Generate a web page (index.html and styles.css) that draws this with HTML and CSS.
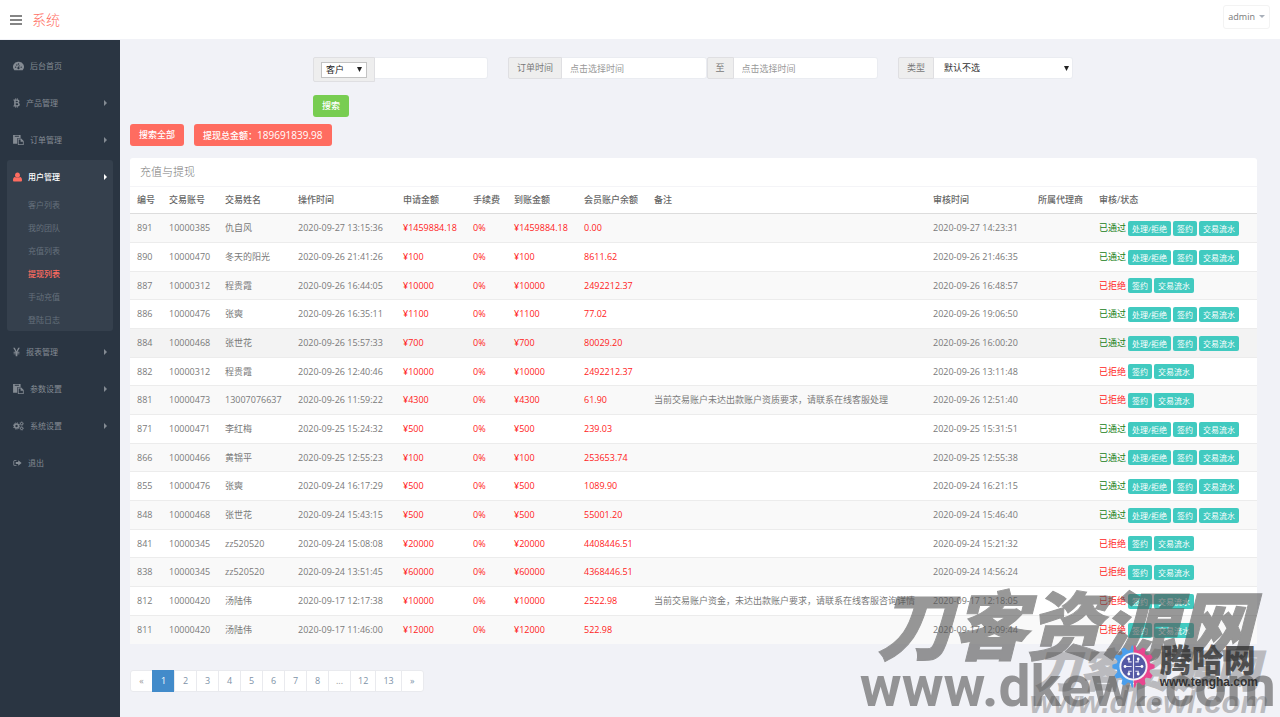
FILE: index.html
```html
<!DOCTYPE html>
<html lang="zh-CN">
<head>
<meta charset="utf-8">
<title>系统</title>
<link rel="stylesheet" href="styles.css">
<script src="app.js" defer></script>
</head>
<body>
<svg class="sprite" aria-hidden="true">
  <symbol id="i-dash" viewBox="0 0 24 24"><path fill-rule="evenodd" d="M12 2A12 12 0 0 0 2 22h20A12 12 0 0 0 12 2ZM5 13a1.7 1.7 0 1 1 .1 3.4A1.7 1.7 0 0 1 5 13Zm3-5.300a1.700 1.700 0 1 1 0 3.400a1.700 1.700 0 0 1 0-3.400Zm4-2.300a1.700 1.700 0 1 1 0 3.400a1.700 1.700 0 0 1 0-3.400Zm2.500 4.600l-1 5a2.600 2.600 0 1 1-2-.5l1.600-5ZM18.500 13a1.700 1.700 0 1 1 0 3.400a1.700 1.700 0 0 1 0-3.400Z"/></symbol>
  <symbol id="i-btc" viewBox="0 0 18 24"><path fill-rule="evenodd" d="M1 3h5V0h2v3h2V0h2v3.300c3 .5 4.500 2 4.500 4.200 0 1.800-1 3-2.500 3.700 2.200.6 3.500 2.200 3.500 4.500 0 3-2 4.900-5.500 5.300v3h-2v-3H8v3H6v-3H1v-2.500h2v-13H1ZM7 6v4h3c3.500 0 3.500-4 0-4Zm0 6.500v5.500h3.500c4 0 4-5.500 0-5.500Z"/></symbol>
  <symbol id="i-paste" viewBox="0 0 26 24"><path fill-rule="evenodd" d="M0 0h18v7h-6c-1.500 0-2 1-2 2v12H0ZM4 2v2h10v-2Z"/><path fill-rule="evenodd" d="M11.500 8.500h8l6 6V24h-14Zm2 2V22h10v-6h-5.500v-5.500Z"/></symbol>
  <symbol id="i-user" viewBox="0 0 22 24"><path d="M11 1c4 0 6 3 6 6.500S14.500 14 11 14 5 11 5 7.500 7 1 11 1Z"/><path d="M5 12c3 3 9 3 12 0 3.500 0 5 4 5 8 0 2-1 3-3 3H3c-2 0-3-1-3-3 0-4 1.500-8 5-8Z"/></symbol>
  <symbol id="i-yen" viewBox="0 0 16 24"><path d="M0 2h4l4 8 4-8h4l-5.500 9.500H15v2h-5v2h5v2h-5V22H6v-4.500H1v-2h5v-2H1v-2h4.500Z"/></symbol>
  <symbol id="i-cogs" viewBox="0 0 28 24"><g fill="none" stroke="currentColor"><circle cx="9" cy="12" r="5" stroke-width="4"/><circle cx="9" cy="12" r="8" stroke-width="2.500" stroke-dasharray="3.140 3.140"/><circle cx="22" cy="6" r="3" stroke-width="2.500"/><circle cx="22" cy="6" r="4.800" stroke-width="1.500" stroke-dasharray="1.900 1.900"/><circle cx="22" cy="18" r="3" stroke-width="2.500"/><circle cx="22" cy="18" r="4.800" stroke-width="1.500" stroke-dasharray="1.900 1.900"/></g></symbol>
  <symbol id="i-out" viewBox="0 0 26 24"><path d="M10 3H6a5 5 0 0 0-5 5v8a5 5 0 0 0 5 5h4v-2.500H6A2.500 2.500 0 0 1 3.500 16V8A2.500 2.500 0 0 1 6 5.500h4Z"/><path d="M8 9h7V4l10 8-10 8v-5H8Z"/></symbol>
</svg>

<header class="topbar">
  <button class="menu-toggle" type="button" aria-label="菜单"><span></span><span></span><span></span></button>
  <a class="brand" href="#">系统</a>
  <button class="account" type="button">admin <i class="caret"></i></button>
</header>

<div class="layout">
  <nav class="sidebar">
    <a class="nav-item" href="#"><svg class="ic wide"><use href="#i-dash"/></svg>后台首页</a>
    <a class="nav-item" href="#"><svg class="ic slim"><use href="#i-btc"/></svg>产品管理<i class="arrow"></i></a>
    <a class="nav-item" href="#"><svg class="ic wide"><use href="#i-paste"/></svg>订单管理<i class="arrow"></i></a>
    <div class="nav-group">
      <a class="nav-item open" href="#"><svg class="ic"><use href="#i-user"/></svg>用户管理<i class="arrow"></i></a>
      <a class="sub-item" href="#">客户列表</a>
      <a class="sub-item" href="#">我的团队</a>
      <a class="sub-item" href="#">充值列表</a>
      <a class="sub-item current" href="#">提现列表</a>
      <a class="sub-item" href="#">手动充值</a>
      <a class="sub-item" href="#">登陆日志</a>
    </div>
    <a class="nav-item" href="#"><svg class="ic slim"><use href="#i-yen"/></svg>报表管理<i class="arrow"></i></a>
    <a class="nav-item" href="#"><svg class="ic wide"><use href="#i-paste"/></svg>参数设置<i class="arrow"></i></a>
    <a class="nav-item" href="#"><svg class="ic wide"><use href="#i-cogs"/></svg>系统设置<i class="arrow"></i></a>
    <a class="nav-item" href="#"><svg class="ic"><use href="#i-out"/></svg>退出</a>
  </nav>

  <main class="content">
    <form class="filters">
      <div class="group narrow">
        <span class="addon tall"><select class="kind" aria-label="查询对象"><option>客户</option></select></span>
        <input class="field" type="text" aria-label="关键字">
      </div>
      <div class="group range">
        <label class="addon" for="from">订单时间</label>
        <input class="field" id="from" type="text" placeholder="点击选择时间">
        <label class="addon" for="to">至</label>
        <input class="field" id="to" type="text" placeholder="点击选择时间">
      </div>
      <div class="group narrow">
        <label class="addon" for="type">类型</label>
        <select class="field" id="type"><option>默认不选</option></select>
      </div>
      <div class="submit-row"><button class="btn green" type="submit">搜索</button></div>
    </form>

    <div class="actions">
      <button class="btn red" type="button">搜索全部</button>
      <button class="btn red" type="button">提现总金额：<span class="sum">189691839.98</span></button>
    </div>

    <section class="panel">
      <h1 class="panel-title">充值与提现</h1>
      <table class="records">
        <colgroup><col class="w-id"><col class="w-account"><col class="w-name"><col class="w-time"><col class="w-money"><col class="w-fee"><col class="w-money"><col class="w-money"><col><col class="w-time"><col class="w-agent"><col class="w-state"></colgroup>
        <thead><tr><th>编号</th><th>交易账号</th><th>交易姓名</th><th>操作时间</th><th>申请金额</th><th>手续费</th><th>到账金额</th><th>会员账户余额</th><th>备注</th><th>审核时间</th><th>所属代理商</th><th>审核/状态</th></tr></thead>
        <tbody id="rows"></tbody>
      </table>
    </section>

    <nav class="pager" aria-label="分页">
      <a class="off" href="#">«</a><a class="on" href="#">1</a><a href="#">2</a><a href="#">3</a><a href="#">4</a><a href="#">5</a><a href="#">6</a><a href="#">7</a><a href="#">8</a><a class="off" href="#">...</a><a href="#">12</a><a href="#">13</a><a href="#">»</a>
    </nav>
  </main>
</div>

<div class="mark mark-small"><div class="mark-name">刀客资源网</div><div class="mark-url">www.dkewl.com</div></div>
<div class="mark mark-big"><div class="mark-name">刀客资源网</div><div class="mark-url">www.dkewl.com</div></div>
<div class="sponsor">
  <svg class="gear" viewBox="-24 -24 48 48" aria-hidden="true">
    <defs>
      <clipPath id="left"><rect x="-24" y="-24" width="23.500" height="48"/></clipPath>
      <clipPath id="right"><rect x=".5" y="-24" width="24" height="48"/></clipPath>
      <g id="cog"><circle r="18"/><path id="t1" d="M-4-16L-1.800-22.500H1.800L4-16V16L1.800 22.500H-1.800L-4 16Z"/><use href="#t1" transform="rotate(30)"/><use href="#t1" transform="rotate(60)"/><use href="#t1" transform="rotate(90)"/><use href="#t1" transform="rotate(120)"/><use href="#t1" transform="rotate(150)"/></g>
    </defs>
    <g clip-path="url(#left)"><use href="#cog" fill="#4a9eec"/></g>
    <g clip-path="url(#right)"><use href="#cog" fill="#e8458f"/></g>
    <circle r="15" fill="#f3f2f8"/><circle r="13" fill="#5459a5"/>
    <path d="M0-13V13M-2-5H-5V-8M-2 0H-9M-2 5H-5V8M2-5H5V-8M2 0H9M2 5H5V8" fill="none" stroke="#e6e6f5" stroke-width="1.200"/>
    <g fill="#fff"><circle cx="-5" cy="-8" r="1.500"/><circle cx="-9" cy="0" r="1.500"/><circle cx="-5" cy="8" r="1.500"/><circle cx="5" cy="-8" r="1.500"/><circle cx="9" cy="0" r="1.500"/><circle cx="5" cy="8" r="1.500"/></g>
  </svg>
  <div><div class="sponsor-name">腾哈网</div><div class="sponsor-url">www.tengha.com</div></div>
</div>
</body>
</html>
```
FILE: styles.css
```css
* { box-sizing: border-box; }
body {
  margin: 0;
  position: relative;
  min-height: 100vh;
  overflow: hidden;
  display: flex;
  flex-direction: column;
  background: #f1f2f7;
  color: #797979;
  font: 9px/14px "Open Sans", "Noto Sans CJK SC", sans-serif;
}
button, input, select { font: inherit; color: inherit; margin: 0; }
a { color: inherit; text-decoration: none; }
.sprite { position: absolute; width: 0; height: 0; }

.topbar {
  height: 40px;
  padding: 0 10px;
  display: flex;
  align-items: center;
  background: #fff;
  border-bottom: 1px solid #f1f2f7;
}
.menu-toggle { display: grid; gap: 2px; width: 12px; padding: 0; border: 0; background: none; }
.menu-toggle span { height: 2px; background: #858585; }
.brand { margin-left: 10px; color: #ff6c60; font-size: 14px; font-weight: 300; line-height: 20px; }
.account {
  margin: 0 0 6px auto;
  height: 24px;
  padding: 0 4px;
  display: flex;
  align-items: center;
  gap: 4px;
  border: 1px solid #f3f3f3;
  border-radius: 3px;
  background: #fff;
}
.caret { border: 3px solid transparent; border-top-color: #a9b0ba; border-bottom: 0; }

.layout { flex: 1; display: flex; }
.sidebar {
  width: 120px;
  flex: none;
  padding: 9px 7px;
  display: flex;
  flex-direction: column;
  gap: 4px;
  background: #2a3542;
  color: #848b93;
  font-size: 8px;
}
.nav-item { height: 33px; padding: 0 6px; display: flex; align-items: center; gap: 6px; }
.ic { width: 9px; height: 10px; flex: none; fill: currentColor; }
.ic.wide { width: 11px; }
.ic.slim { width: 7px; }
.arrow { margin-left: auto; border: 3px solid transparent; border-left-color: currentColor; border-right: 0; }
.nav-group { border-radius: 3px; background: #35404d; }
.open { color: #fff; font-weight: 500; }
.open .ic { color: #ff6c60; }
.sub-item { display: block; padding-left: 21px; line-height: 23px; color: #65707c; }
.sub-item.current { color: #ff6c60; font-weight: 500; }

.content { flex: 1; min-width: 0; padding: 17px 23px 20px 10px; }
.filters { display: flex; flex-wrap: wrap; align-items: flex-start; gap: 13px 20px; padding-left: 183px; }
.group { display: flex; align-items: flex-start; }
.narrow { width: 175px; }
.range { width: 370px; }
.addon {
  height: 22px;
  padding: 0 8px;
  display: flex;
  align-items: center;
  flex: none;
  border: 1px solid #dfdfe2;
  border-radius: 2px 0 0 2px;
  background: #eee;
}
.addon.tall { height: 25px; padding: 0 7px; }
.kind {
  width: 46px;
  height: 16px;
  padding: 0 4px;
  border: 1px solid #c3c3c3;
  color: #222;
}
.kind, select.field {
  appearance: none;
  background: #fff url("data:image/svg+xml,%3Csvg xmlns='http://www.w3.org/2000/svg' viewBox='0 0 5 5'%3E%3Cpath fill='%23222' d='M0 0h5L2.500 5z'/%3E%3C/svg%3E") no-repeat right 4px center / 5px 5px;
}
.field {
  flex: 1;
  width: 0;
  min-width: 0;
  height: 22px;
  padding: 0 8px;
  border: 1px solid #eaecf1;
  border-left: 0;
  border-radius: 0 3px 3px 0;
  background-color: #fff;
}
select.field { padding: 0 10px; color: #333; background-position: right 3px center; }
.field::placeholder { color: #999; }
.submit-row { width: 100%; }
.btn { height: 22px; padding: 0 9px; border: 0; border-radius: 3px; color: #fff; font-weight: 500; }
.green { background: #78cd51; }
.red { background: #ff6c60; }
.sum { font-size: 10px; }
.actions { display: flex; gap: 10px; margin: 7px 0 12px; }

.panel { background: #fff; border-radius: 3px; }
.panel-title {
  margin: 0;
  padding: 0 10px;
  font-size: 11px;
  font-weight: 300;
  line-height: 28px;
  border-bottom: 1px solid #f4f4f7;
}
.records { width: 100%; table-layout: fixed; border-collapse: separate; border-spacing: 0; }
.w-id { width: 32px; }
.w-account { width: 56px; }
.w-name { width: 73px; }
.w-time { width: 105px; }
.w-money { width: 70px; }
.w-fee { width: 41px; }
.w-agent { width: 61px; }
.w-state { width: 165px; }
th, td { padding: 0 0 0 7px; text-align: left; white-space: nowrap; }
th { height: 27px; font-weight: 500; color: #666; border-bottom: 1px solid #ddd; }
td { height: 29px; border-bottom: 1px solid #ececec; }
tr:nth-child(3n) td { height: 28px; }
tbody tr:nth-child(odd) { background: #f9f9f9; }
tbody tr:nth-child(5) { background: #f3f3f3; }
tbody tr:last-child td { border-bottom: 0; }
.money { color: #f22; }
.state { display: flex; align-items: center; gap: 2px; }
.passed { color: #168016; }
.refused { color: #f22; }
.mini {
  height: 15px;
  padding: 0 4px;
  border: 0;
  border-radius: 2px;
  background: #41cac0;
  color: #fff;
  font-size: 8px;
  line-height: 15px;
}

.pager { display: flex; margin-top: 26px; }
.pager a {
  min-width: 23px;
  padding: 0 7px;
  margin-right: -1px;
  line-height: 20px;
  text-align: center;
  border: 1px solid #e9eaee;
  background: #fff;
  color: #8093a8;
}
.pager a:first-child { border-radius: 3px 0 0 3px; }
.pager a:last-child { border-radius: 0 3px 3px 0; }
.pager .off { color: #999; }
.pager .on { background: #428bca; border-color: #428bca; color: #fff; }

.mark { position: absolute; pointer-events: none; color: #555; font-weight: 700; white-space: nowrap; text-align: right; }
.mark-name { font-family: "Noto Sans CJK SC", sans-serif; font-weight: 900; font-style: italic; -webkit-text-stroke: 1px #555; }
.mark-url { font-family: Roboto, sans-serif; }
.mark-big { right: 4px; bottom: 0; opacity: .6; }
.mark-big .mark-name { padding-right: 24px; font-size: 75px; line-height: 70px; }
.mark-big .mark-url { font-size: 57px; line-height: 60px; }
.mark-small { right: 12px; bottom: 0; opacity: .35; }
.mark-small .mark-name { font-size: 45px; line-height: 42px; padding-right: 8px; }
.mark-small .mark-url { font-family: "Liberation Sans", sans-serif; font-size: 31px; font-style: italic; line-height: 28px; }
.sponsor {
  position: absolute;
  right: 22px;
  bottom: 28px;
  display: flex;
  align-items: center;
  gap: 4px;
  color: #333;
  font-weight: 700;
}
.gear { width: 45px; height: 45px; }
.sponsor-name { font-size: 32px; line-height: 30px; font-weight: 900; opacity: .8; }
.sponsor-url { font: 700 12px/14px "Liberation Sans", sans-serif; }
```
FILE: app.js
```js
const records = [
  ["891", "10000385", "仇自风", "2020-09-27 13:15:36", "1459884.18", "0.00", "", "2020-09-27 14:23:31", true],
  ["890", "10000470", "冬天的阳光", "2020-09-26 21:41:26", "100", "8611.62", "", "2020-09-26 21:46:35", true],
  ["887", "10000312", "程贵霞", "2020-09-26 16:44:05", "10000", "2492212.37", "", "2020-09-26 16:48:57", false],
  ["886", "10000476", "张奭", "2020-09-26 16:35:11", "1100", "77.02", "", "2020-09-26 19:06:50", true],
  ["884", "10000468", "张世花", "2020-09-26 15:57:33", "700", "80029.20", "", "2020-09-26 16:00:20", true],
  ["882", "10000312", "程贵霞", "2020-09-26 12:40:46", "10000", "2492212.37", "", "2020-09-26 13:11:48", false],
  ["881", "10000473", "13007076637", "2020-09-26 11:59:22", "4300", "61.90", "当前交易账户未达出款账户资质要求，请联系在线客服处理", "2020-09-26 12:51:40", false],
  ["871", "10000471", "李红梅", "2020-09-25 15:24:32", "500", "239.03", "", "2020-09-25 15:31:51", true],
  ["866", "10000466", "黄锦平", "2020-09-25 12:55:23", "100", "253653.74", "", "2020-09-25 12:55:38", true],
  ["855", "10000476", "张奭", "2020-09-24 16:17:29", "500", "1089.90", "", "2020-09-24 16:21:15", true],
  ["848", "10000468", "张世花", "2020-09-24 15:43:15", "500", "55001.20", "", "2020-09-24 15:46:40", true],
  ["841", "10000345", "zz520520", "2020-09-24 15:08:08", "20000", "4408446.51", "", "2020-09-24 15:21:32", false],
  ["838", "10000345", "zz520520", "2020-09-24 13:51:45", "60000", "4368446.51", "", "2020-09-24 14:56:24", false],
  ["812", "10000420", "汤陆伟", "2020-09-17 12:17:38", "10000", "2522.98", "当前交易账户资金，未达出款账户要求，请联系在线客服咨询详情", "2020-09-17 12:18:05", false],
  ["811", "10000420", "汤陆伟", "2020-09-17 11:46:00", "12000", "522.98", "", "2020-09-17 12:09:44", false]
];

const button = (label) => `<button class="mini" type="button">${label}</button>`;

document.getElementById("rows").innerHTML = records.map(
  ([id, account, name, time, amount, balance, note, reviewed, passed]) => `<tr>
    <td>${id}</td><td>${account}</td><td>${name}</td><td>${time}</td>
    <td class="money">¥${amount}</td><td class="money">0%</td><td class="money">¥${amount}</td><td class="money">${balance}</td>
    <td>${note}</td><td>${reviewed}</td><td></td>
    <td><div class="state"><span class="${passed ? "passed" : "refused"}">${passed ? "已通过" : "已拒绝"}</span>${passed ? button("处理/拒绝") : ""}${button("签约")}${button("交易流水")}</div></td>
  </tr>`
).join("");
```
